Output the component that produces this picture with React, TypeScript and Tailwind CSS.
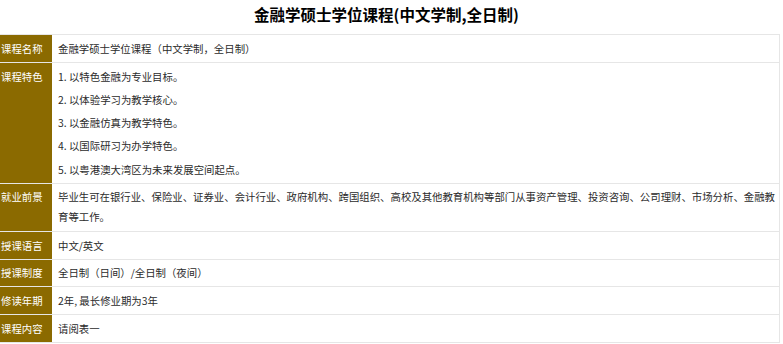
import React from "react";

const font = { fontFamily: '"Noto Sans CJK SC", "Noto Sans", sans-serif' };

export default function App() {
  const items = [
    "1. 以特色金融为专业目标。",
    "2. 以体验学习为教学核心。",
    "3. 以金融仿真为教学特色。",
    "4. 以国际研习为办学特色。",
    "5. 以粤港澳大湾区为未来发展空间起点。",
  ];
  return (
    <div className="w-[783px] h-[344px] bg-white overflow-hidden" style={font}>
      <div className="h-[34px] flex items-center justify-center pr-[10px] pb-[4px]">
        <h1 className="text-[15.5px] font-bold text-black leading-none">金融学硕士学位课程(中文学制,全日制)</h1>
      </div>
      <div className="w-[780px] border-t border-r border-[#e6e6e6] text-[10.4px]">
        <div className="flex border-b border-[#e6e6e6] h-[28px]">
          <div className="w-[52px] shrink-0 bg-[#8b6a00] text-white pl-[1px] flex items-center">课程名称</div>
          <div className="flex-1 pl-[6px] text-[#2b2b2b] flex items-center">金融学硕士学位课程（中文学制，全日制）</div>
        </div>
        <div className="flex border-b border-[#e6e6e6] h-[121px]">
          <div className="w-[52px] shrink-0 bg-[#8b6a00] text-white pl-[1px] pt-[1.5px]">
            <div className="leading-[23.3px]">课程特色</div>
          </div>
          <div className="flex-1 pl-[6px] text-[#2b2b2b] pt-[1.5px]">
            {items.map((t) => (
              <div key={t} className="leading-[23.3px]">{t}</div>
            ))}
          </div>
        </div>
        <div className="flex border-b border-[#e6e6e6] h-[48px]">
          <div className="w-[52px] shrink-0 bg-[#8b6a00] text-white pl-[1px] pt-[2.5px] leading-[20px]">就业前景</div>
          <div className="flex-1 pl-[6px] pr-[2px] text-[#2b2b2b] pt-[2.5px] leading-[20px]">
            毕业生可在银行业、保险业、证券业、会计行业、政府机构、跨国组织、高校及其他教育机构等部门从事资产管理、投资咨询、公司理财、市场分析、金融教
            <br />
            育等工作。
          </div>
        </div>
        {[
          ["授课语言", "中文/英文"],
          ["授课制度", "全日制（日间）/全日制（夜间）"],
          ["修读年期", "2年, 最长修业期为3年"],
          ["课程内容", "请阅表一"],
        ].map(([l, v]) => (
          <div key={l} className="flex border-b border-[#e6e6e6] h-[27.7px]">
            <div className="w-[52px] shrink-0 bg-[#8b6a00] text-white pl-[1px] flex items-center">{l}</div>
            <div className="flex-1 pl-[6px] text-[#2b2b2b] flex items-center">{v}</div>
          </div>
        ))}
      </div>
    </div>
  );
}
